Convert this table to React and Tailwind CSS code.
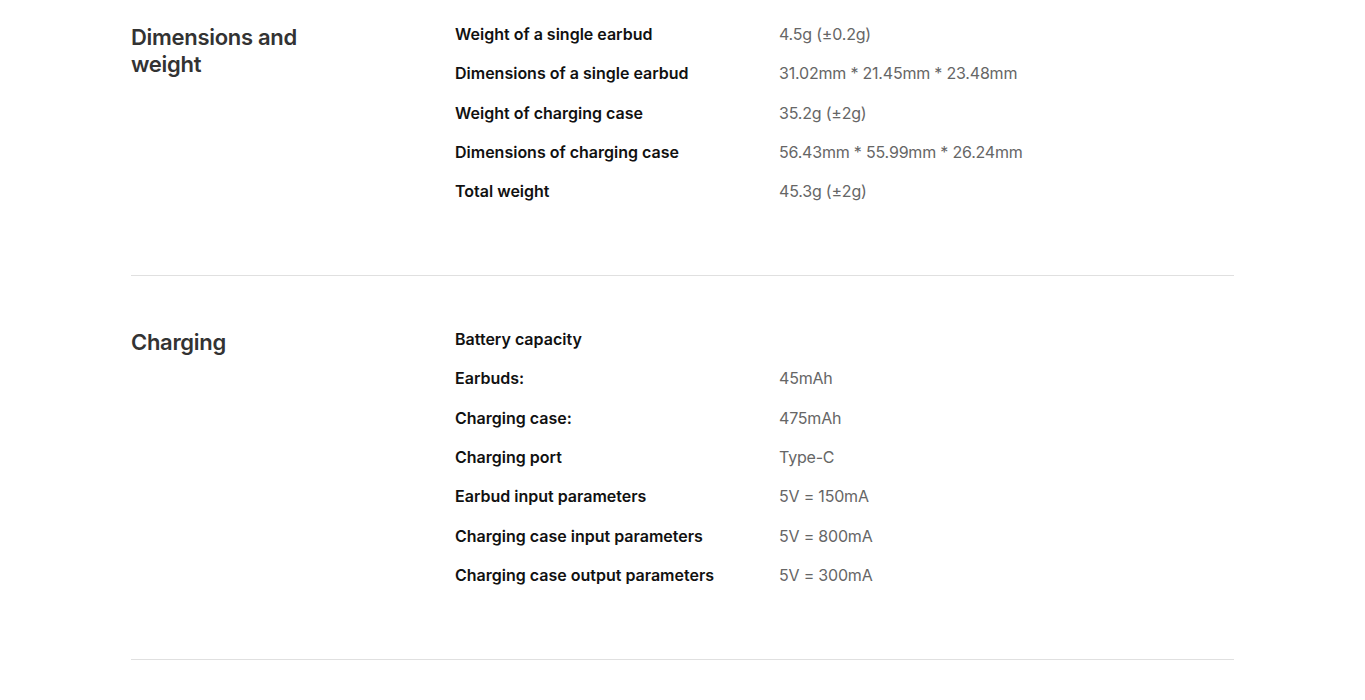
const sections = [
  {
    title: "Dimensions and weight",
    rows: [
      ["Weight of a single earbud", "4.5g (±0.2g)"],
      ["Dimensions of a single earbud", "31.02mm * 21.45mm * 23.48mm"],
      ["Weight of charging case", "35.2g (±2g)"],
      ["Dimensions of charging case", "56.43mm * 55.99mm * 26.24mm"],
      ["Total weight", "45.3g (±2g)"],
    ],
  },
  {
    title: "Charging",
    rows: [
      ["Battery capacity", ""],
      ["Earbuds:", "45mAh"],
      ["Charging case:", "475mAh"],
      ["Charging port", "Type-C"],
      ["Earbud input parameters", "5V = 150mA"],
      ["Charging case input parameters", "5V = 800mA"],
      ["Charging case output parameters", "5V = 300mA"],
    ],
  },
];

function SpecSection({ title, rows, first }) {
  return (
    <section
      className={`flex border-b border-[#e0e0e0] pb-[72px] ${first ? "pt-[22px]" : "pt-[51px]"}`}
    >
      <h2 className="mt-[2px] w-[324px] shrink-0 pr-[124px] text-[22px] font-semibold leading-[27px] tracking-[-0.3px] text-[#333]">
        {title}
      </h2>
      <div className="flex flex-1 flex-col gap-y-[15.3px]">
        {rows.map(([label, value]) => (
          <div key={label} className="flex text-[16px] leading-[24px]">
            <span className="w-[324px] shrink-0 font-semibold text-[#111]">{label}</span>
            <span className="tracking-[-0.2px] text-[#666]">{value}</span>
          </div>
        ))}
      </div>
    </section>
  );
}

export default function App() {
  return (
    <div className="min-h-[700px] bg-white font-['Inter','Noto_Sans',sans-serif]">
      <div className="mx-auto w-[1103px]">
        {sections.map((s, i) => (
          <SpecSection key={s.title} title={s.title} rows={s.rows} first={i === 0} />
        ))}
      </div>
    </div>
  );
}
